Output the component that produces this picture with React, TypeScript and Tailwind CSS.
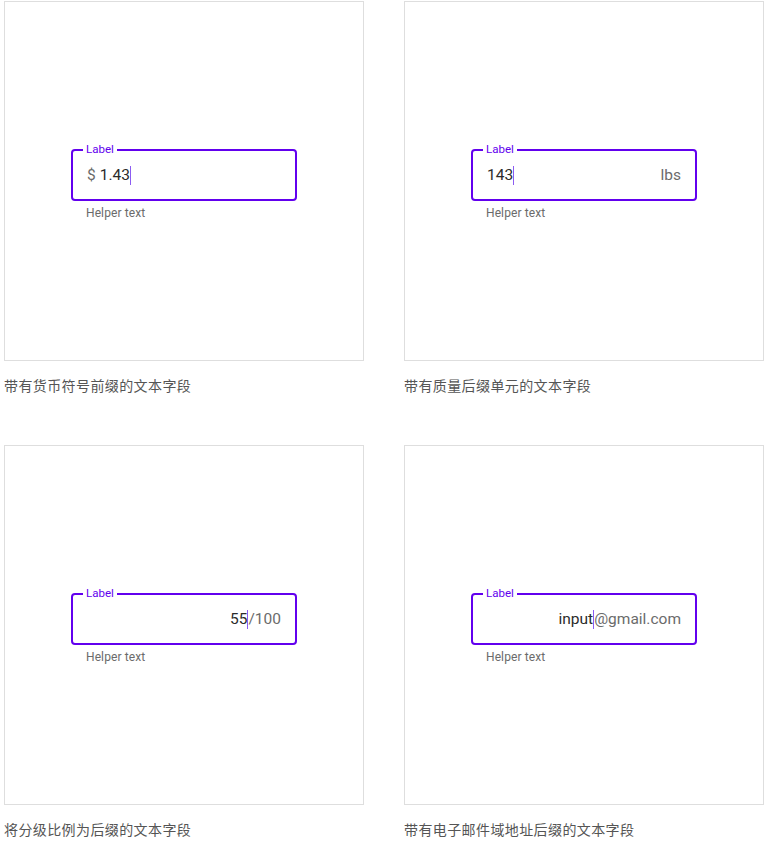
import React from 'react';

type FieldProps = {
  children: React.ReactNode;
  alignRight?: boolean;
};

const Cursor = () => <span className="inline-block w-px h-[19px] bg-[#8c5cf2] align-middle -mt-[2px]" />;

const OutlinedField = (props: FieldProps) => {
  return (
    <div className="flex flex-col">
      <div
        className={`relative w-[226px] h-[52px] border-2 border-[#6200ee] rounded-[4px] flex items-center px-[14px] pt-[3px] text-[15.5px] ${
          props.alignRight ? 'justify-end' : ''
        }`}
      >
        <span className="absolute -top-[10px] left-[10px] px-[3px] bg-white text-[11.5px] leading-[16px] text-[#6200ee]">
          Label
        </span>
        {props.children}
      </div>
      <div className="pl-[15px] pt-[4px] text-[12px] leading-[16px] text-[#6b6b6b] tracking-[0.1px]">Helper text</div>
    </div>
  );
};

const Demo = (props: { caption: string; children: React.ReactNode }) => {
  return (
    <div className="flex flex-col">
      <div className="h-[360px] border border-[#dedede] bg-white flex items-center justify-center pt-[7px]">
        {props.children}
      </div>
      <p
        className="mt-[14px] text-[14px] leading-[20px] tracking-[0.4px] text-[#555]"
        style={{ fontFamily: '"Noto Sans CJK SC", "Noto Sans", sans-serif' }}
      >
        {props.caption}
      </p>
    </div>
  );
};

export default function App() {
  return (
    <div className="min-h-screen bg-white pt-px pl-[4px]" style={{ fontFamily: 'Roboto, "Noto Sans", sans-serif' }}>
      <div className="grid grid-cols-[360px_360px] gap-x-[40px] gap-y-[50px]">
        <Demo caption="带有货币符号前缀的文本字段">
          <OutlinedField>
            <span className="text-[#6b6b6b] mr-[4px]">$</span>
            <span className="text-[#2b2b2b]">1.43</span>
            <Cursor />
          </OutlinedField>
        </Demo>
        <Demo caption="带有质量后缀单元的文本字段">
          <OutlinedField>
            <span className="text-[#2b2b2b]">143</span>
            <Cursor />
            <span className="ml-auto text-[#6b6b6b]">lbs</span>
          </OutlinedField>
        </Demo>
        <Demo caption="将分级比例为后缀的文本字段">
          <OutlinedField alignRight>
            <span className="text-[#2b2b2b]">55</span>
            <Cursor />
            <span className="text-[#6b6b6b]">/100</span>
          </OutlinedField>
        </Demo>
        <Demo caption="带有电子邮件域地址后缀的文本字段">
          <OutlinedField alignRight>
            <span className="text-[#2b2b2b]">input</span>
            <Cursor />
            <span className="text-[#6b6b6b]">@gmail.com</span>
          </OutlinedField>
        </Demo>
      </div>
    </div>
  );
}
